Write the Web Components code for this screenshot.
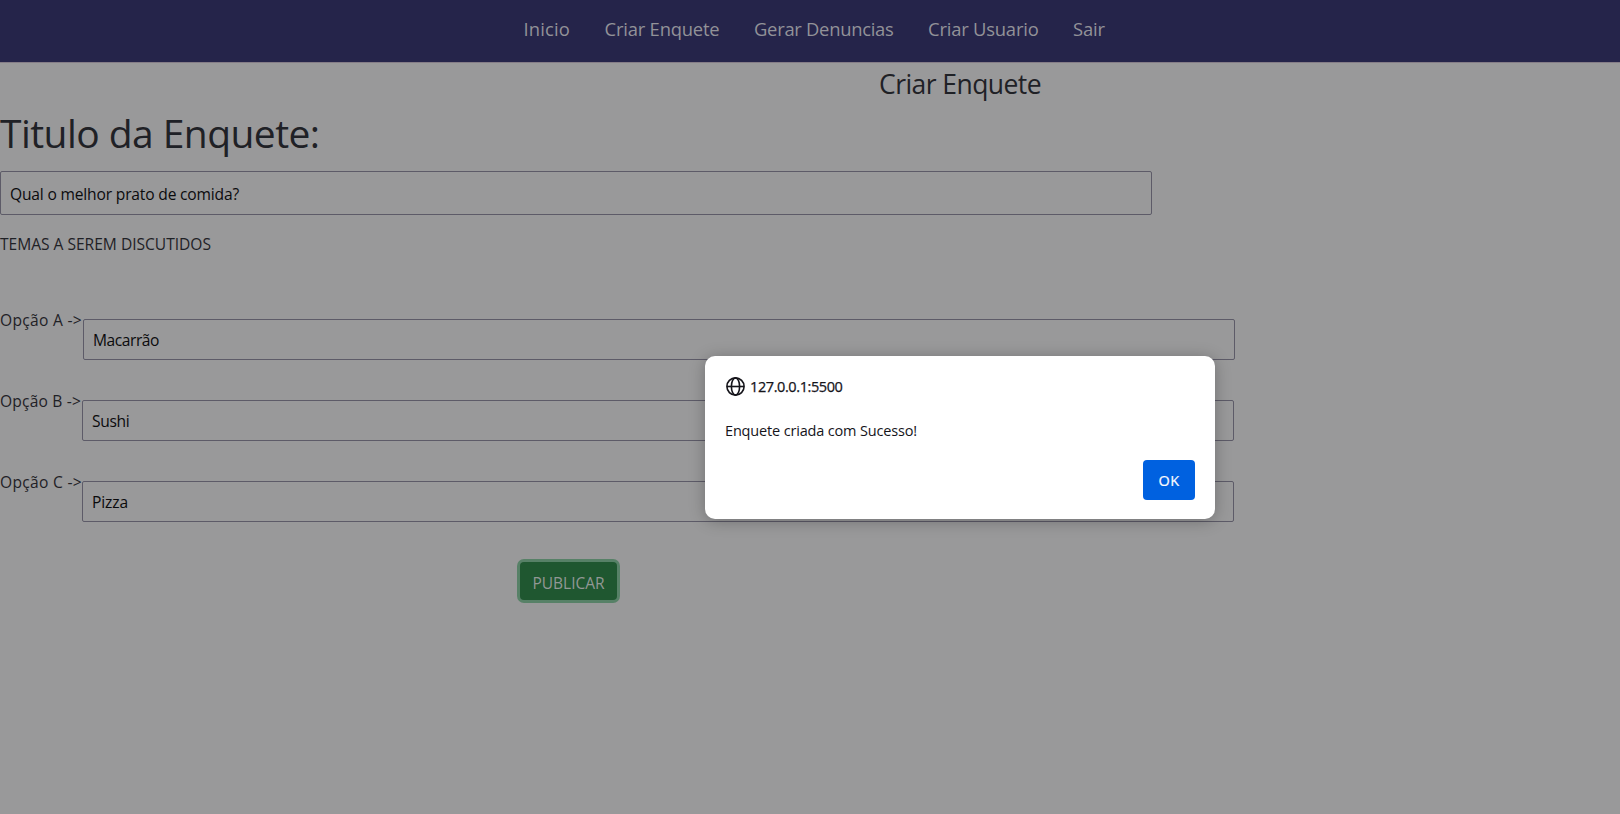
<!DOCTYPE html>
<html lang="pt-br">
<head>
<meta charset="utf-8">
<title>Criar Enquete</title>
<style>
html,body{margin:0;height:100%;overflow:hidden;background:#99999a;font-family:"Open Sans","Noto Sans",sans-serif;font-size:15.6px;color:#1f2126}
</style>
</head>
<body>
<enquete-page></enquete-page>
<script>
function define(name, html, ready) {
  const template = document.createElement('template');
  template.innerHTML = html;
  customElements.define(name, class extends HTMLElement {
    constructor() {
      super();
      this.attachShadow({mode: 'open'}).append(template.content.cloneNode(true));
    }
    connectedCallback() { if (ready) ready(this); }
  });
}

/* Text run tracked so that it spans the width given in its attribute. */
define('fit-text', `<style>:host{display:inline-block;white-space:pre}span{display:inline-block}</style><span><slot></slot></span>`, el => {
  const target = parseFloat(el.getAttribute('width'));
  const run = el.shadowRoot.querySelector('span');
  const natural = run.getBoundingClientRect().width;
  run.style.letterSpacing = (target - natural) / el.textContent.length + 'px';
  el.style.width = target + 'px';
});

define('nav-bar', `<style>
:host{display:flex;align-items:center;gap:34.5px;height:62px;box-sizing:border-box;padding:0 0 5px 523.5px;background:#25244a;box-shadow:0 1px #857d87;color:#929298;font-size:18.4px}
</style><slot></slot>`);

define('text-field', `<style>
:host{display:flex;align-items:center;box-sizing:border-box;flex:none;width:1152px;height:41px;padding:1px 0 0 9px;border:1px solid #5d5b68;border-radius:2px;color:#0b0b0d}
:host([tall]){height:44px;padding-top:2px}
</style><slot></slot>`);

define('option-row', `<style>
:host{display:flex;height:52px;line-height:25px}
div{flex:none}
div.label{width:var(--label-width,82px)}
::slotted(text-field){margin-top:11px}
</style><div class="label"><slot name="label"></slot></div><slot></slot>`);

define('publish-button', `<style>
:host{display:flex;align-items:center;justify-content:center;width:97px;height:38px;box-sizing:border-box;padding-top:3px;border-radius:4px;background:#1f5730;box-shadow:0 0 0 3px #578167;color:#929795;font-size:15.5px}
</style><slot></slot>`);

define('alert-dialog', `<style>
:host{position:absolute;left:705px;top:356px;width:510px;height:163px;box-sizing:border-box;padding:21px 20px 19px 21px;background:#fff;border-radius:10px;box-shadow:0 2px 16px rgba(0,0,0,.27);display:flex;flex-direction:column;color:#15141a;font-size:14.5px}
header{display:flex;align-items:center;height:19px;gap:5px;-webkit-text-stroke:.25px #15141a}
svg{width:19px;height:19px;flex:none}
p{margin:21px 0 0 -1px;line-height:28px}
button{margin:auto 0 0 auto;width:52px;height:40px;border:0;border-radius:4px;background:#0061e0;color:#fbfbfe;font:14.5px "Open Sans","Noto Sans",sans-serif;-webkit-text-stroke:.2px #fbfbfe;padding:1px 0 0}
</style>
<header><svg viewBox="0 0 19 19" fill="none" stroke="#15141a" stroke-width="1.6"><circle cx="9.5" cy="9.5" r="8.6"/><ellipse cx="9.5" cy="9.5" rx="4.1" ry="8.6"/><path d="M1 9.5h17"/></svg><slot name="origin"></slot></header>
<p><slot></slot></p>
<button><fit-text width="21">OK</fit-text></button>`);

define('enquete-page', `<style>
:host{display:block;position:relative;width:1620px;height:814px;overflow:hidden}
h2,h1,p{margin:0;font-weight:400}
h2{padding:1px 0 0 879px;font-size:26.5px;line-height:42px}
h1{font-size:39px;line-height:56px;padding-bottom:10px}
p{line-height:24px;padding:17px 0 52px}
.options{display:flex;flex-direction:column;gap:29px}
publish-button{margin:40px 0 0 520px}
</style>
<nav-bar><fit-text width="46.5">Inicio</fit-text><fit-text width="115">Criar Enquete</fit-text><fit-text width="139.5">Gerar Denuncias</fit-text><fit-text width="110.5">Criar Usuario</fit-text><fit-text width="32">Sair</fit-text></nav-bar>
<h2><fit-text width="162">Criar Enquete</fit-text></h2>
<h1><fit-text width="319.5">Titulo da Enquete:</fit-text></h1>
<text-field tall><fit-text width="229">Qual o melhor prato de comida?</fit-text></text-field>
<p><fit-text width="211">TEMAS A SEREM DISCUTIDOS</fit-text></p>
<div class="options">
<option-row style="--label-width:83px"><fit-text slot="label" width="82">Opção A -&gt;</fit-text><text-field><fit-text width="66">Macarrão</fit-text></text-field></option-row>
<option-row><fit-text slot="label" width="81">Opção B -&gt;</fit-text><text-field><fit-text width="37.5">Sushi</fit-text></text-field></option-row>
<option-row><fit-text slot="label" width="82">Opção C -&gt;</fit-text><text-field><fit-text width="36">Pizza</fit-text></text-field></option-row>
</div>
<publish-button><fit-text width="72">PUBLICAR</fit-text></publish-button>
<alert-dialog><fit-text slot="origin" width="92.5">127.0.0.1:5500</fit-text><fit-text width="192">Enquete criada com Sucesso!</fit-text></alert-dialog>`);
</script>
</body>
</html>
